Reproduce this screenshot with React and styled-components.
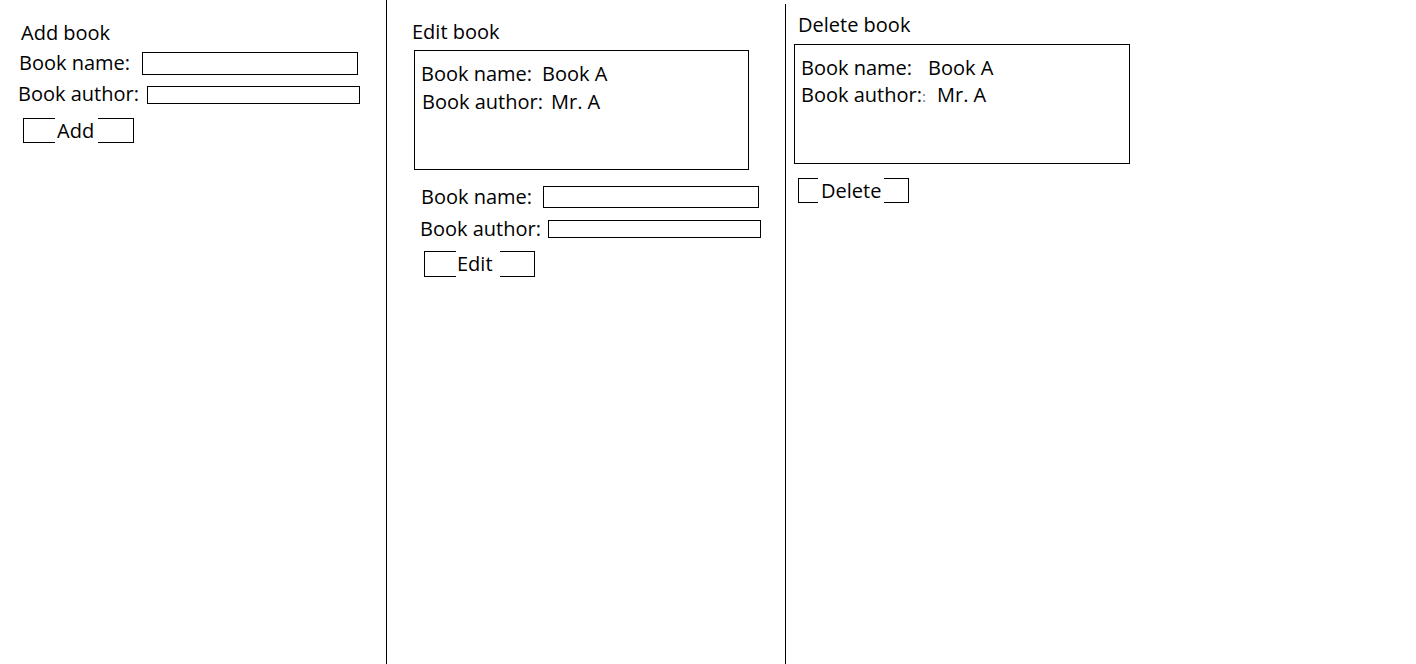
import React from 'react';
import styled, { createGlobalStyle } from 'styled-components';

const GlobalStyle = createGlobalStyle`
  html, body {
    margin: 0;
    padding: 0;
    background: #fff;
  }
  body {
    font-family: 'Open Sans', 'Noto Sans', sans-serif;
    font-size: 20px;
    color: #000;
  }
`;

export default function App() {
  return (
    <>
      <GlobalStyle />
      <StyledPage>
        <StyledColumn $width='386px' $top='19px'>
          <StyledTitle $ml='21px'>Add book</StyledTitle>
          <Field mt='3px' ml='19px' labelWidth='123px' inputWidth='216px' inputHeight='23px' inputTop='3px'>
            Book name:
          </Field>
          <Field mt='4px' ml='18px' labelWidth='129px' inputWidth='213px' inputHeight='18px' inputTop='6px'>
            Book author:
          </Field>
          <Button mt='11px' ml='23px' offset='31px' pad='0 4px 0 2px'>
            Add
          </Button>
        </StyledColumn>

        <StyledDivider $top='0px' />

        <StyledColumn $width='398px' $top='18px'>
          <StyledTitle $ml='25px'>Edit book</StyledTitle>
          <StyledInfoBox $mt='5px' $ml='27px' $pl='6px' $width='335px'>
            <StyledInfoRow $labelWidth='121px'>
              <span>Book name:</span>
              <span>Book A</span>
            </StyledInfoRow>
            <StyledInfoRow $labelWidth='129px' $ml='1px' $mt='1px'>
              <span>Book author:</span>
              <span>Mr. A</span>
            </StyledInfoRow>
          </StyledInfoBox>
          <Field mt='13px' ml='34px' labelWidth='122px' inputWidth='216px' inputHeight='22px' inputTop='3px'>
            Book name:
          </Field>
          <Field mt='5px' ml='33px' labelWidth='128px' inputWidth='213px' inputHeight='18px' inputTop='5px'>
            Book author:
          </Field>
          <Button mt='9px' ml='37px' height='26px' offset='31px' pad='0 7px 0 1px'>
            Edit
          </Button>
        </StyledColumn>

        <StyledDivider $top='4px' />

        <StyledColumn $top='11px'>
          <StyledTitle $ml='12px'>Delete book</StyledTitle>
          <StyledInfoBox $mt='6px' $ml='8px' $pl='6px' $width='336px'>
            <StyledInfoRow $labelWidth='127px'>
              <span>Book name:</span>
              <span>Book A</span>
            </StyledInfoRow>
            <StyledInfoRow $labelWidth='136px'>
              <span>
                Book author:<StyledFaint>:</StyledFaint>
              </span>
              <span>Mr. A</span>
            </StyledInfoRow>
          </StyledInfoBox>
          <Button mt='14px' ml='12px' offset='19px' pad='0 3px'>
            Delete
          </Button>
        </StyledColumn>
      </StyledPage>
    </>
  );
}

function Field({ children, mt, ml, labelWidth, inputWidth, inputHeight, inputTop }) {
  return (
    <StyledField $mt={mt} $ml={ml}>
      <StyledLabel $width={labelWidth}>{children}</StyledLabel>
      <StyledInput $width={inputWidth} $height={inputHeight} $top={inputTop} />
    </StyledField>
  );
}

function Button({ children, mt, ml, height = '25px', offset, pad }) {
  return (
    <StyledButton $mt={mt} $ml={ml} $height={height}>
      <StyledButtonLabel $height={height} $offset={offset} $pad={pad}>
        {children}
      </StyledButtonLabel>
    </StyledButton>
  );
}

const StyledPage = styled.main`
  display: flex;
  height: 100vh;
  min-height: 664px;
`;

const StyledColumn = styled.section`
  display: flex;
  flex-direction: column;
  align-items: flex-start;
  flex: ${(p) => (p.$width ? `0 0 ${p.$width}` : '1 1 auto')};
  padding-top: ${(p) => p.$top};
  box-sizing: border-box;
`;

const StyledDivider = styled.div`
  flex: 0 0 1px;
  margin-top: ${(p) => p.$top};
  background: #000;
`;

const StyledTitle = styled.h2`
  margin: 0 0 0 ${(p) => p.$ml};
  font-size: 20px;
  font-weight: 400;
  line-height: 27px;
`;

const StyledField = styled.div`
  display: flex;
  align-items: flex-start;
  margin: ${(p) => p.$mt} 0 0 ${(p) => p.$ml};
  line-height: 27px;
`;

const StyledLabel = styled.label`
  flex: 0 0 ${(p) => p.$width};
  white-space: nowrap;
`;

const StyledInput = styled.input`
  box-sizing: border-box;
  width: ${(p) => p.$width};
  height: ${(p) => p.$height};
  margin: ${(p) => p.$top} 0 0;
  padding: 0;
  border: 1px solid #000;
  border-radius: 0;
  background: #fff;
  outline: none;
`;

const StyledButton = styled.button`
  box-sizing: border-box;
  display: flex;
  justify-content: flex-start;
  width: 111px;
  height: ${(p) => p.$height};
  margin: ${(p) => p.$mt} 0 0 ${(p) => p.$ml};
  padding: 0;
  border: 1px solid #000;
  border-radius: 0;
  background: #fff;
  font: inherit;
  color: #000;
`;

const StyledButtonLabel = styled.span`
  height: ${(p) => p.$height};
  line-height: ${(p) => p.$height};
  margin: -1px 0 -1px ${(p) => p.$offset};
  padding: ${(p) => p.$pad};
  background: #fff;
`;

const StyledInfoBox = styled.div`
  box-sizing: border-box;
  width: ${(p) => p.$width};
  height: 120px;
  margin: ${(p) => p.$mt} 0 0 ${(p) => p.$ml};
  padding: 9px 0 0 ${(p) => p.$pl};
  border: 1px solid #000;
`;

const StyledInfoRow = styled.div`
  display: flex;
  line-height: 27px;
  margin: ${(p) => p.$mt || '0'} 0 0 ${(p) => p.$ml || '0'};

  & > span:first-child {
    flex: 0 0 ${(p) => p.$labelWidth};
    white-space: nowrap;
  }
`;

const StyledFaint = styled.span`
  color: #777;
  font-size: 15px;
`;
